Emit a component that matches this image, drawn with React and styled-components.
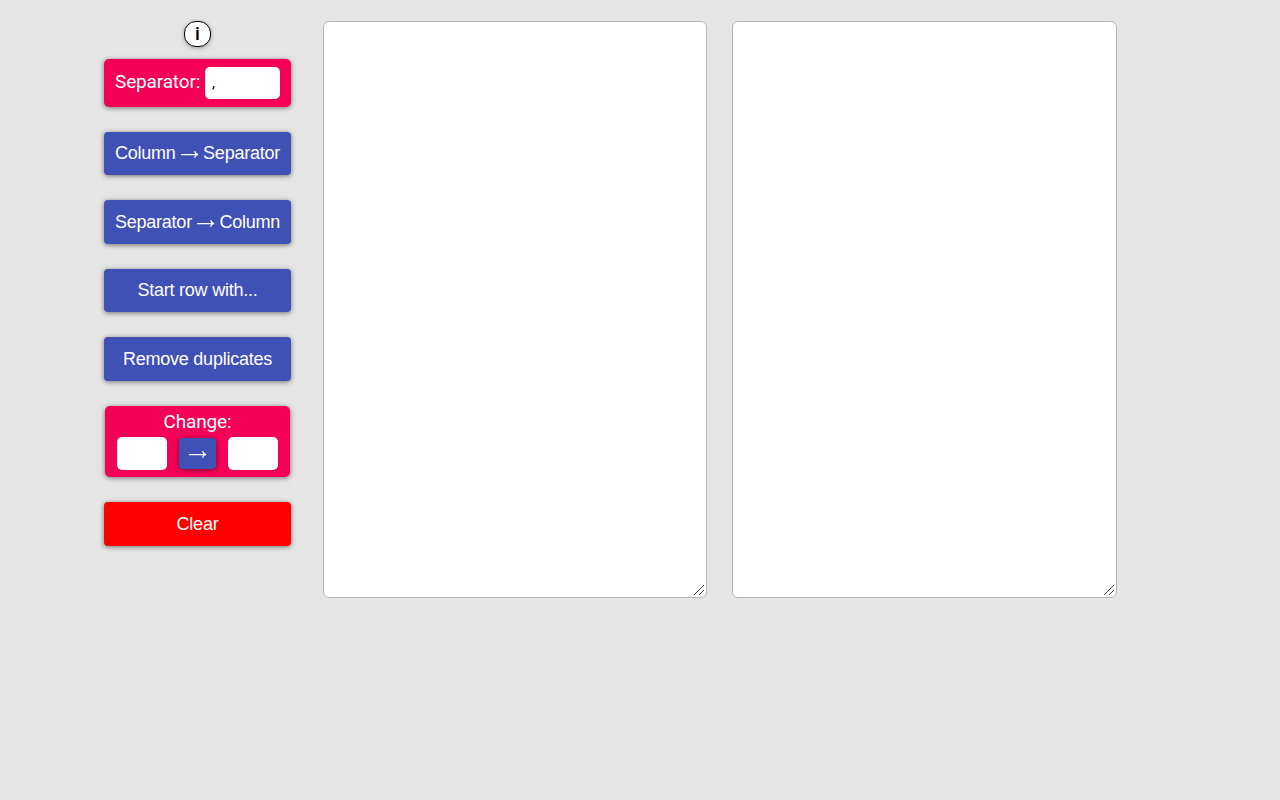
import React from "react";
import styled, { createGlobalStyle } from "styled-components";

const GlobalStyle = createGlobalStyle`
  *, *::before, *::after { box-sizing: border-box; }
  body {
    margin: 0;
    background: #e5e5e5;
    font-family: Roboto, "Liberation Sans", sans-serif;
  }
`;

const Page = styled.main`
  display: flex;
  align-items: flex-start;
  padding: 21px 0 0 104px;
`;

const Sidebar = styled.aside`
  display: flex;
  flex-direction: column;
  align-items: center;
  width: 187px;
  margin-right: 32px;
`;

const InfoButton = styled.button`
  width: 27px;
  height: 26px;
  padding: 0;
  margin-bottom: 12px;
  border: 1px solid #000;
  border-radius: 12px;
  background: #fff;
  color: #000;
  font: 500 19px/24px Roboto, sans-serif;
  box-shadow: 0 1px 4px rgba(0, 0, 0, 0.3);
`;

const Controls = styled.div`
  display: flex;
  flex-direction: column;
  align-items: center;
  gap: 25px;
  width: 100%;
`;

const Panel = styled.div`
  background: #f50057;
  color: #fff;
  border-radius: 5px;
  box-shadow: 0 1px 5px rgba(0, 0, 0, 0.5);
  font-size: 19px;
  letter-spacing: -0.15px;
`;

const SeparatorPanel = styled(Panel)`
  display: flex;
  justify-content: space-between;
  width: 187px;
  height: 48px;
  padding: 8px 11px 0 11px;
  line-height: 30px;
`;

const ChangePanel = styled(Panel)`
  width: 185px;
  height: 71px;
  padding: 5px 12px 0;
  text-align: center;
  line-height: 22px;
`;

const ChangeRow = styled.div`
  display: flex;
  align-items: center;
  justify-content: space-between;
  margin-top: 4px;
`;

const TextInput = styled.input`
  width: ${(p) => p.$width}px;
  height: ${(p) => p.$height}px;
  padding: 0 7px;
  border: 0;
  border-radius: 5px;
  background: #fff;
  color: #000;
  font: 15px Roboto, sans-serif;
`;

const ActionButton = styled.button`
  display: flex;
  align-items: center;
  justify-content: center;
  width: 100%;
  height: ${(p) => (p.$danger ? "44.2px" : "43.48px")};
  padding: ${(p) => (p.$danger ? "1px 0 0" : "0")};
  border: 0;
  border-radius: 4px;
  background: ${(p) => (p.$danger ? "#ff0000" : "#3f51b5")};
  color: #fff;
  font: 18px "Liberation Sans", Arial, sans-serif;
  letter-spacing: -0.23px;
  white-space: nowrap;
  box-shadow: 0 1px 5px rgba(0, 0, 0, 0.5);
`;

const SwapButton = styled(ActionButton)`
  width: 37px;
  height: 31px;
`;

const ArrowIcon = styled.svg`
  width: 18px;
  height: 9px;
  margin: ${(p) => (p.$inline ? "2px 4.5px 0 5px" : "2px 0 0")};
  fill: none;
  stroke: currentColor;
  stroke-width: 1.25;
`;

const Editors = styled.section`
  display: flex;
  gap: 25px;
`;

const EditorFrame = styled.div`
  position: relative;
  width: ${(p) => p.$width}px;
  height: 577px;
`;

const EditorInput = styled.textarea`
  display: block;
  width: 100%;
  height: 100%;
  margin: 0;
  padding: 8px;
  border: 1px solid #b5b5b5;
  border-radius: 6px;
  background: #fff;
  resize: none;
`;

const ResizeGrip = styled.svg`
  position: absolute;
  right: 3px;
  bottom: 3px;
  width: 10px;
  height: 10px;
  fill: none;
  stroke: #444;
  stroke-width: 1;
  pointer-events: none;
`;

function Arrow({ inline }) {
  return (
    <ArrowIcon viewBox="0 0 18 9" $inline={inline} role="img" aria-label="to">
      <path d="M0 4.5H16.5M13.5 1.3C14 2.9 15.3 4.1 17 4.5C15.3 4.9 14 6.1 13.5 7.7" />
    </ArrowIcon>
  );
}

function Editor({ width }) {
  return (
    <EditorFrame $width={width}>
      <EditorInput />
      <ResizeGrip viewBox="0 0 10 10" aria-hidden="true">
        <path d="M0 10L10 0M5 10L10 5" />
      </ResizeGrip>
    </EditorFrame>
  );
}

export default function App() {
  return (
    <>
      <GlobalStyle />
      <Page>
        <Sidebar>
          <InfoButton>i</InfoButton>
          <Controls>
            <SeparatorPanel>
              <label htmlFor="separator">Separator:</label>
              <TextInput id="separator" $width={75} $height={32} defaultValue="," />
            </SeparatorPanel>
            <ActionButton>Column<Arrow inline />Separator</ActionButton>
            <ActionButton>Separator<Arrow inline />Column</ActionButton>
            <ActionButton>Start row with...</ActionButton>
            <ActionButton>Remove duplicates</ActionButton>
            <ChangePanel>
              Change:
              <ChangeRow>
                <TextInput $width={50} $height={33} />
                <SwapButton><Arrow /></SwapButton>
                <TextInput $width={50} $height={33} />
              </ChangeRow>
            </ChangePanel>
            <ActionButton $danger>Clear</ActionButton>
          </Controls>
        </Sidebar>
        <Editors>
          <Editor width={384} />
          <Editor width={385} />
        </Editors>
      </Page>
    </>
  );
}
